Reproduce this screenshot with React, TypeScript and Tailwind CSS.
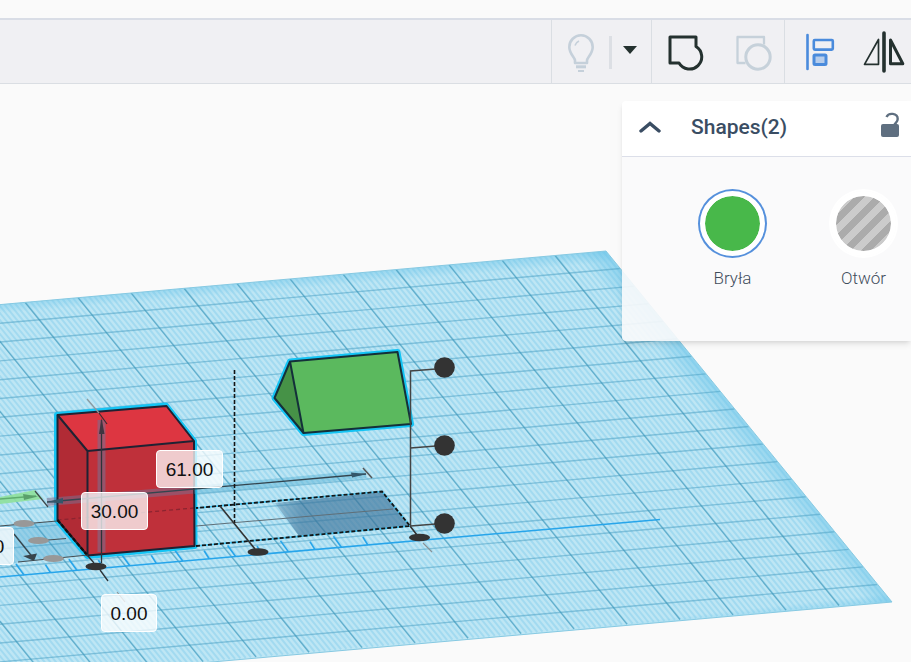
import React, { useState } from 'react';

interface Point {
  x: number;
  y: number;
}

interface DimensionFieldProps {
  label: string;
  initial: string;
  className: string;
}

const SLOPE = 0.0882;
const CELL = 53;

// Far edge of the workplane at a given x
const farY = (x: number) => 251 + (606 - x) * SLOPE;

const plane = '606,251 892,602 -400,716 -400,340';

const depthLines: Point[] = Array.from({ length: 26 }, (_, k) => {
  const x = 555 - k * CELL;
  return { x, y: farY(x) };
});

const fineLines: Point[] = Array.from({ length: 240 }, (_, k) => {
  const x = 603 - k * (CELL / 10);
  return { x, y: farY(x) };
});

const crossLines: Point[] = Array.from({ length: 19 }, (_, j) => ({
  x: 606 + (j + 1) * 14.28,
  y: 251 + (j + 1) * 17.55,
}));

const rulerTicks = Array.from({ length: 14 }, (_, i) => ({ x: 24 + i * 26.45, long: i % 2 === 0 }));

const Workplane: React.FC = () => (
  <g>
    <defs>
      <clipPath id="planeClip">
        <polygon points={plane} />
      </clipPath>
      <linearGradient id="rightFade" gradientUnits="userSpaceOnUse" x1="749" y1="426" x2="731" y2="441">
        <stop offset="0" stopColor="#6cc5e9" stopOpacity="0.55" />
        <stop offset="1" stopColor="#6cc5e9" stopOpacity="0" />
      </linearGradient>
      <linearGradient id="farFade" gradientUnits="userSpaceOnUse" x1="606" y1="251" x2="607" y2="263">
        <stop offset="0" stopColor="#6cc5e9" stopOpacity="0.5" />
        <stop offset="1" stopColor="#6cc5e9" stopOpacity="0" />
      </linearGradient>
      <linearGradient id="nearFade" gradientUnits="userSpaceOnUse" x1="892" y1="602" x2="891" y2="593">
        <stop offset="0" stopColor="#6cc5e9" stopOpacity="0.45" />
        <stop offset="1" stopColor="#6cc5e9" stopOpacity="0" />
      </linearGradient>
    </defs>
    <polygon points={plane} fill="#bee6f4" />
    <g clipPath="url(#planeClip)">
      {fineLines.map((p) => (
        <line key={p.x} x1={p.x} y1={p.y} x2={p.x + 284} y2={p.y + 350} stroke="#a2daf0" strokeWidth="2" />
      ))}
      <polygon points={plane} fill="url(#rightFade)" />
      <polygon points={plane} fill="url(#farFade)" />
      <polygon points={plane} fill="url(#nearFade)" />
      {crossLines.map((p) => (
        <line key={p.x} x1={p.x} y1={p.y} x2={p.x - 1000} y2={p.y + 1000 * SLOPE} stroke="#4fa3c4" strokeOpacity="0.55" strokeWidth="1.4" />
      ))}
      {depthLines.map((p) => (
        <line key={p.x} x1={p.x} y1={p.y} x2={p.x + 284} y2={p.y + 350} stroke="#3f96b9" strokeOpacity="0.65" strokeWidth="1.3" />
      ))}
    </g>
    <polygon points={plane} fill="none" stroke="#86c9e2" strokeWidth="1" />
  </g>
);

const Ruler: React.FC = () => (
  <g stroke="#27a5ea" strokeWidth="1.6" fill="none">
    <path d="M0 577 660 519.5" />
    {rulerTicks.map(({ x, long }) => {
      const y = 577 - x * 0.0871;
      return <line key={x} x1={x} y1={y} x2={x - (long ? 8 : 5)} y2={y - (long ? 11 : 8)} />;
    })}
  </g>
);

const Shadows: React.FC = () => (
  <g>
    <defs>
      <linearGradient id="shadowFade" x1="0" y1="0" x2="1" y2="0">
        <stop offset="0" stopColor="#3b7299" stopOpacity="0.35" />
        <stop offset="0.2" stopColor="#3b7299" stopOpacity="0.65" />
        <stop offset="1" stopColor="#3b7299" stopOpacity="0.65" />
      </linearGradient>
    </defs>
    <polygon points="0,526 57,521 87,555 20,562 0,566" fill="#3b9cc9" fillOpacity="0.3" />
    <polygon points="275,503 382,492 410,526 299,536" fill="url(#shadowFade)" />
    <polygon points="0,497 35,490 43,499 0,504" fill="#8ee09b" fillOpacity="0.9" />
    <path d="M0 499 36 496" stroke="#5fae70" strokeWidth="1.3" />
    <path d="M23 494 38 496.500 24 500z" fill="#5aa06b" />
  </g>
);

const Cube: React.FC = () => (
  <g strokeLinejoin="round">
    <polygon points="57,415 166,405.500 194,441 194.500,546 87.500,556 57,520" fill="#14c4f4" stroke="#14c4f4" strokeWidth="6" />
    <polygon points="57.500,415 166.500,406 194,441 87.500,451" fill="#dd3641" />
    <polygon points="57.500,415 87.500,451 87.500,555.500 57.500,520" fill="#b12b35" />
    <polygon points="87.500,451 194,441 194.500,546 87.500,555.500" fill="#bf303a" />
    <path d="M57.500 520 194 508" stroke="#8c2430" strokeWidth="1.3" strokeDasharray="4 3" />
    <path d="M47 502 194 489.500" stroke="#7d6d8c" strokeOpacity="0.55" strokeWidth="8" />
    <path d="M101.500 420V552" stroke="#7d6d8c" strokeOpacity="0.6" strokeWidth="8" />
    <g fill="none" stroke="#1f2233" strokeWidth="2">
      <polygon points="57.500,415 166.500,406 194,441 194.500,546 87.500,555.500 57.500,520" />
      <path d="M57.500 415 87.500 451 194 441M87.500 451V555.500" />
    </g>
    <path d="M57.500 520 87.500 555.500" stroke="#111" strokeWidth="2.200" strokeDasharray="4 2" />
  </g>
);

const Roof: React.FC = () => (
  <g strokeLinejoin="round">
    <polygon points="290,361.500 397.500,352 411,424 303.500,433 274.500,398" fill="#14c4f4" stroke="#14c4f4" strokeWidth="6" />
    <polygon points="290,361.500 303.500,433 274.500,398" fill="#469247" />
    <polygon points="290,361.500 397.500,352 411,424 303.500,433" fill="#5bb95e" />
    <g fill="none" stroke="#14303a" strokeWidth="2">
      <polygon points="290,361.500 397.500,352 411,424 303.500,433 274.500,398" />
      <path d="M290 361.500 303.500 433" />
    </g>
  </g>
);

const Guides: React.FC = () => (
  <g fill="none">
    <path d="M194 490 366 474" stroke="#4aa9d0" strokeOpacity="0.4" strokeWidth="8" />
    <path d="M47 502 366 474" stroke="#33454f" strokeWidth="1.4" />
    <path d="M351 472.500 367 474 352 477.500zM63 498 47 502 63 503.500z" fill="#33566a" />
    <path d="M363 468 372 478" stroke="#555" strokeWidth="1.5" />
    <path d="M35 491 48 507" stroke="#3d464a" strokeWidth="1.2" />
    <path d="M196 526 393 509" stroke="#5f6f78" strokeWidth="1.1" />
    <path d="M196 546 410 526 382 491.500 196 508" stroke="#3fc0ee" strokeWidth="1.6" />
    <path d="M196 546 410 526 382 491.500 196 508" stroke="#141414" strokeWidth="1.8" strokeDasharray="4 2" />
    <path d="M234.500 370V523" stroke="#141414" strokeWidth="1.6" strokeDasharray="4 2" />
    <path d="M220 506 255 549M410 526 417 535" stroke="#333" strokeWidth="1.6" />
    <path d="M423 543 432 552M117 592 125 602" stroke="#8a9296" strokeWidth="1.1" />
    <path d="M410.500 526V371L436 369M410.500 448 436 446M410.500 526 436 524" stroke="#444" strokeWidth="1.5" />
    <path d="M87 399 99 413" stroke="#8e999e" strokeWidth="1.2" />
    <path d="M99 413 107 424" stroke="#3a2a30" strokeWidth="1.2" />
    <path d="M101.500 420V563M88 556 94 563M100 570 108 581" stroke="#2d3338" strokeWidth="1.3" />
    <path d="M101.500 418 104.500 434H99z" fill="#3f3540" />
    <path d="M0 526 57 521M48 540 66 538.500M18 562 88 555" stroke="#444d52" strokeWidth="1.2" />
    <path d="M14 534 34 559" stroke="#37444c" strokeWidth="1.4" />
    <path d="M23 556 37 553.500 34 561z" fill="#37444c" />
    <g fill="#333">
      <circle cx="444.500" cy="367.500" r="10.300" />
      <circle cx="444.500" cy="445.500" r="10.300" />
      <circle cx="444.500" cy="523.500" r="10.300" />
      <ellipse cx="258" cy="552" rx="10.500" ry="3.800" />
      <ellipse cx="419.500" cy="537.500" rx="10.500" ry="3.800" />
      <ellipse cx="96" cy="566.500" rx="10.500" ry="3.800" />
    </g>
    <g fill="#989898">
      <ellipse cx="24" cy="523.500" rx="10.500" ry="3.600" />
      <ellipse cx="38.500" cy="540.500" rx="10.500" ry="3.600" />
      <ellipse cx="53.500" cy="558.500" rx="10.500" ry="3.600" />
    </g>
  </g>
);

const DimensionField: React.FC<DimensionFieldProps> = ({ label, initial, className }) => {
  const [value, setValue] = useState(initial);

  return (
    <input
      type="text"
      aria-label={label}
      value={value}
      onChange={(e) => setValue(e.target.value)}
      className={`absolute h-[38px] rounded border border-white bg-white/75 pt-0.5 text-center text-[19px] text-[#111] focus:outline-none ${className}`}
      style={{ fontFamily: '"Liberation Sans", Arial, sans-serif' }}
    />
  );
};

const BulbIcon = () => (
  <svg width="28" height="40" viewBox="0 0 28 40" fill="none" stroke="#c5d0da" strokeWidth="2.6" aria-hidden="true">
    <path d="M8 30V27.500C8 24.500 2.300 21 2.300 14a11.700 11.700 0 0 1 23.400 0C25.700 21 20 24.500 20 27.500V30z" strokeLinejoin="round" />
    <path d="M8 12.500c.5-2 1.800-3.500 4-4.500" strokeWidth="1.6" />
    <path d="M9 33.800h10" strokeWidth="3" />
    <path d="M11 38h6" strokeWidth="2" />
  </svg>
);

const GroupIcon = () => (
  <svg width="36" height="36" viewBox="0 0 36 36" fill="none" stroke="#24312f" strokeWidth="3" strokeLinejoin="round" aria-hidden="true">
    <path d="M2 2H28V11.500A12.200 12.200 0 1 1 11 28H2z" />
  </svg>
);

const UngroupIcon = () => (
  <svg width="36" height="36" viewBox="0 0 36 36" fill="none" stroke="#c6d1da" strokeLinejoin="round" aria-hidden="true">
    <path d="M9.500 28H1.500V2H28V9.500" strokeWidth="2.300" />
    <circle cx="22" cy="22" r="12.200" strokeWidth="3" />
  </svg>
);

const AlignIcon = () => (
  <svg width="30" height="38" viewBox="0 0 30 38" fill="none" stroke="#4a8bdc" aria-hidden="true">
    <path d="M2.500 2V36" strokeWidth="2.600" strokeLinecap="round" />
    <rect x="8.800" y="7" width="19" height="9.600" rx="1" strokeWidth="2.600" />
    <rect x="9" y="22" width="12" height="9.500" rx="1" fill="#b7cdeb" strokeWidth="3" />
  </svg>
);

const MirrorIcon = () => (
  <svg width="42" height="42" viewBox="0 0 42 42" fill="none" stroke="#24312f" strokeLinejoin="round" strokeLinecap="round" aria-hidden="true">
    <path d="M21 2V40" strokeWidth="3.600" />
    <path d="M15.500 8.500V33.300H1.500z" strokeWidth="1.700" />
    <path d="M27.500 9V32.700H39.800z" strokeWidth="3" />
  </svg>
);

const UnlockIcon = () => (
  <svg width="18" height="26" viewBox="0 0 18 26" fill="none" aria-hidden="true">
    <path d="M5.500 5C7.500 .3 16.700 .8 16.700 7c0 3-2 3.500-3.500 6" stroke="#5f6f80" strokeWidth="2.400" />
    <rect y="12" width="18" height="13" rx="2" fill="#5f6f80" />
  </svg>
);

const Toolbar: React.FC = () => (
  <header className="relative z-10 pt-[18px]">
    <div className="flex h-[66px] justify-end border-t-2 border-b border-t-[#d9dde6] border-b-[#dadee3] bg-[#f0f0f3]">
      <div className="flex w-[100px] items-center border-l border-[#dadee3] pt-0.5">
        <button type="button" aria-label="Show all" className="ml-[15px]">
          <BulbIcon />
        </button>
        <span className="ml-[14px] h-[33px] w-[3px] bg-[#dcdfe4]" />
        <button type="button" aria-label="More visibility options" className="ml-[11px] pb-1.5">
          <svg width="14" height="8" viewBox="0 0 14 8" aria-hidden="true">
            <path d="M0 0H14L7 8z" fill="#24312f" />
          </svg>
        </button>
      </div>
      <div className="flex w-[133px] items-center gap-8 border-l border-[#dadee3] pt-0.5 pl-4">
        <button type="button" aria-label="Group">
          <GroupIcon />
        </button>
        <button type="button" aria-label="Ungroup">
          <UngroupIcon />
        </button>
      </div>
      <div className="flex w-[127px] items-center gap-7 border-l border-[#dadee3] pl-5">
        <button type="button" aria-label="Align" className="shrink-0">
          <AlignIcon />
        </button>
        <button type="button" aria-label="Mirror" className="shrink-0">
          <MirrorIcon />
        </button>
      </div>
    </div>
  </header>
);

const ShapePanel: React.FC = () => {
  const [kind, setKind] = useState('solid');

  return (
    <aside className="relative mt-[17px] w-[289px] self-start overflow-hidden rounded-l shadow-md">
      <div className="flex h-14 items-center border-b border-[#dcdfe9] bg-white pr-3 pb-1 pl-[17px]">
        <button type="button" aria-label="Collapse">
          <svg width="22" height="12" viewBox="0 0 22 12" fill="none" aria-hidden="true">
            <path d="M2 10 11 2.500 20 10" stroke="#3a4d63" strokeWidth="3.400" strokeLinecap="round" />
          </svg>
        </button>
        <h2 className="ml-[30px] flex-1 text-[21px] leading-6 font-medium text-[#3a4d63]">Shapes(2)</h2>
        <button type="button" aria-label="Lock" className="pb-1">
          <UnlockIcon />
        </button>
      </div>
      <div className="flex h-[184px] bg-[#fafafb]/90 pt-[34px] pl-[45px]">
        <label className="flex w-[131px] shrink-0 flex-col items-center gap-[10px] text-[17px] leading-6 font-light text-[#3f4d5b]">
          <input
            type="radio"
            name="kind"
            checked={kind === 'solid'}
            onChange={() => setKind('solid')}
            className="size-[65px] appearance-none rounded-full border-[5px] border-white bg-[#48b84a] bg-clip-padding ring-2 ring-white checked:ring-[#5590dc]"
          />
          Bryła
        </label>
        <label className="flex w-[131px] shrink-0 flex-col items-center gap-[10px] text-[17px] leading-6 font-light text-[#3f4d5b]">
          <input
            type="radio"
            name="kind"
            checked={kind === 'hole'}
            onChange={() => setKind('hole')}
            className="size-[65px] appearance-none rounded-full border-[5px] border-white bg-[repeating-linear-gradient(135deg,#ababab_0_7px,#cbcbcb_7px_14px)] bg-clip-padding ring-2 ring-white checked:ring-[#5590dc]"
          />
          Otwór
        </label>
      </div>
    </aside>
  );
};

const App: React.FC = () => {
  return (
    <div
      className="relative flex min-h-screen flex-col overflow-hidden bg-[#fafafa]"
      style={{ fontFamily: 'Roboto, "Noto Sans", sans-serif' }}
    >
      <svg className="absolute top-0 left-0" width="911" height="662" viewBox="0 0 911 662" role="img" aria-label="Workplane with a box and a roof">
        <Workplane />
        <Ruler />
        <Shadows />
        <Cube />
        <Roof />
        <Guides />
      </svg>
      <DimensionField label="Width" initial="61.00" className="top-[450px] left-[156px] w-[67px]" />
      <DimensionField label="Height" initial="30.00" className="top-[492px] left-[81px] w-[67px]" />
      <DimensionField label="Elevation" initial="0.00" className="top-[594px] left-[101px] w-14" />
      <DimensionField label="Depth" initial="30.00" className="top-[527px] left-[-53px] w-[67px]" />
      <Toolbar />
      <main className="flex flex-1 justify-end">
        <ShapePanel />
      </main>
    </div>
  );
};

export default App;
